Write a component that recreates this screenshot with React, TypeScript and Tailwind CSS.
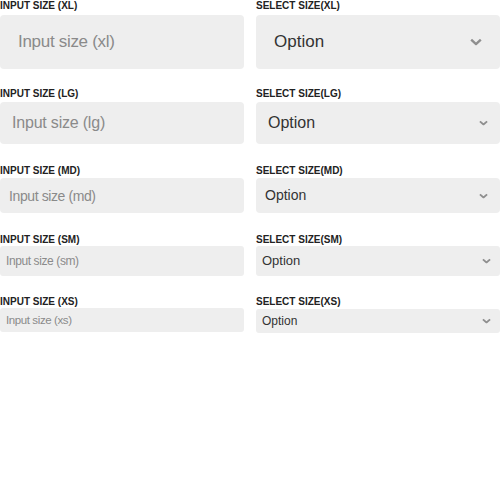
import React from "react";

const rows = [
  {
    key: "XL",
    ph: "Input size (xl)",
    wrap: "mb-[19px]",
    label: "mb-[3px]",
    box: "h-[54px] pl-[18px] pr-[18px] rounded-[4px]",
    text: "text-[17px] tracking-[-0.3px]",
    optText: "text-[17px]",
    chev: "w-[12px] h-[7px] right-[18px]",
  },
  {
    key: "LG",
    ph: "Input size (lg)",
    wrap: "mb-[21px]",
    label: "mb-[2px]",
    box: "h-[42px] pl-[12px] pr-[12px] rounded-[4px]",
    text: "text-[16px] tracking-[-0.2px]",
    optText: "text-[16px]",
    chev: "w-[9px] h-[5px] right-[12px]",
  },
  {
    key: "MD",
    ph: "Input size (md)",
    wrap: "mb-[21px]",
    label: "mb-[1px]",
    box: "h-[35px] pl-[9px] pr-[9px] rounded-[4px]",
    text: "text-[14px] tracking-[-0.4px]",
    optText: "text-[14px]",
    chev: "w-[9px] h-[5px] right-[12px]",
  },
  {
    key: "SM",
    ph: "Input size (sm)",
    wrap: "mb-[20px]",
    label: "mb-0",
    box: "h-[30px] pl-[6px] pr-[6px] rounded-[3px]",
    text: "text-[12px] tracking-[-0.4px]",
    optText: "text-[13px]",
    chev: "w-[9px] h-[5px] right-[9px]",
  },
  {
    key: "XS",
    ph: "Input size (xs)",
    wrap: "mb-0",
    label: "mb-0",
    box: "h-[24px] pl-[6px] pr-[6px] rounded-[3px]",
    text: "text-[11.5px] tracking-[-0.4px]",
    optText: "text-[12px]",
    chev: "w-[9px] h-[5px] right-[9px]",
  },
];

const Chevron = ({ className }: { className: string }) => (
  <svg
    viewBox="0 0 12 7"
    className={"absolute top-1/2 -translate-y-1/2 pointer-events-none " + className}
    preserveAspectRatio="none"
  >
    <path d="M1.2 1.2 L6 5.6 L10.8 1.2" fill="none" stroke="#8f8f8f" strokeWidth="2.4" />
  </svg>
);

export default function App() {
  return (
    <div
      className="w-[500px] bg-white text-[#222]"
      style={{ fontFamily: '"Liberation Sans", Arial, sans-serif' }}
    >
      {rows.map((r) => (
        <div key={r.key} className={"grid grid-cols-2 gap-x-3 " + r.wrap}>
          <div className="flex flex-col">
            <label className={"text-[10px] leading-[12px] font-bold text-[#222] " + r.label}>
              INPUT SIZE ({r.key})
            </label>
            <input
              placeholder={r.ph}
              className={
                "w-full bg-[#eeeeee] outline-none text-[#333] placeholder:text-[#8a8a8a] " +
                r.box +
                " " +
                r.text
              }
            />
          </div>
          <div className="flex flex-col">
            <label className={"text-[10px] leading-[12px] font-bold text-[#222] " + r.label}>
              SELECT SIZE({r.key})
            </label>
            <div className="relative">
              <select
                className={
                  "w-full appearance-none bg-[#eeeeee] outline-none text-[#333] " +
                  r.box +
                  " " +
                  r.optText
                }
                defaultValue="Option"
              >
                <option>Option</option>
              </select>
              <Chevron className={r.chev} />
            </div>
          </div>
        </div>
      ))}
    </div>
  );
}
